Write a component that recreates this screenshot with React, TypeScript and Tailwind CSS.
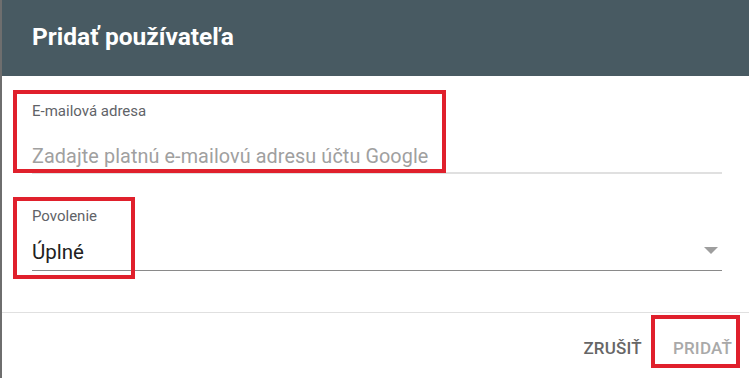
import React from 'react';

const font = { fontFamily: 'Roboto, "Noto Sans", sans-serif' };

export default function App() {
  return (
    <div
      className="relative w-[749px] h-[378px] overflow-hidden bg-white border-l-2 border-[#6e6e6e] text-[#212121]"
      style={font}
    >
      {/* header */}
      <div className="h-[76px] bg-[#485a62] flex items-center pl-[30px]">
        <h1 className="text-[24.5px] font-bold text-white leading-none pb-[1px]">Pridať používateľa</h1>
      </div>

      {/* form */}
      <div className="pl-[30px] pr-[27px]">
        <div className="pt-[26px]">
          <div className="text-[15px] text-[#5f6368] leading-[18px]">E-mailová adresa</div>
          <div className="mt-[23px] text-[19.8px] leading-[28px] text-[#a0a0a0] tracking-[0.1px]">
            Zadajte platnú e-mailovú adresu účtu Google
          </div>
          <div className="mt-[1px] h-[2px] bg-[#e0e0e0]" />
        </div>

        <div className="pt-[33px]">
          <div className="text-[15px] text-[#5f6368] leading-[18px]">Povolenie</div>
          <div className="mt-[13px] flex items-center justify-between">
            <span className="text-[20.5px] leading-[28px] text-[#212121]">Úplné</span>
            <svg width="14" height="7" viewBox="0 0 14 7" className="mr-[4px] mb-[4px]">
              <path d="M0 0 L14 0 L7 7 Z" fill="#9e9e9e" />
            </svg>
          </div>
          <div className="mt-[4px] h-[1px] bg-[#8a8a8a]" />
        </div>
      </div>

      <div className="mt-[41px] h-[1px] bg-[#e0e0e0]" />

      {/* footer */}
      <div className="flex justify-end items-center gap-[31px] pr-[17px] pt-[27px]">
        <button className="text-[17px] font-medium text-[#666666] tracking-[0.2px] leading-none">ZRUŠIŤ</button>
        <button className="text-[17px] font-medium text-[#a9a9a9] tracking-[0.2px] leading-none">PRIDAŤ</button>
      </div>

      {/* annotation boxes */}
      <div className="absolute left-[11px] top-[90px] w-[433px] h-[83px] border-[4px] border-[#e0202c]" />
      <div className="absolute left-[11px] top-[197px] w-[122px] h-[82px] border-[4px] border-[#e0202c]" />
      <div className="absolute left-[649px] top-[315px] w-[89px] h-[53px] border-[4px] border-[#e0202c]" />
    </div>
  );
}
